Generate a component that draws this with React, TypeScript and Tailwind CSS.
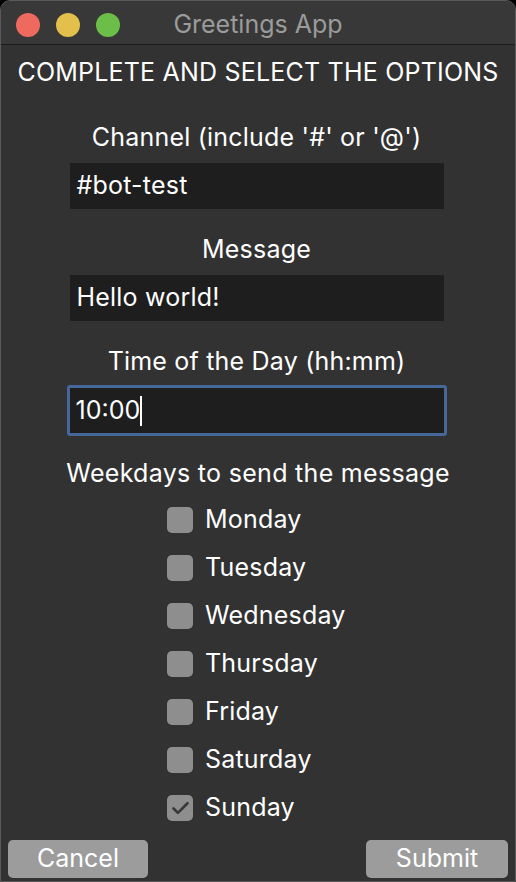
import { Check } from 'lucide-react';

const days = ['Monday', 'Tuesday', 'Wednesday', 'Thursday', 'Friday', 'Saturday', 'Sunday'];

function Field({ label, value, focused }: { label: string; value: string; focused?: boolean }) {
  return (
    <div className="flex flex-col items-center">
      <p className="text-[25px] leading-[28px] tracking-[0.2px] text-white">{label}</p>
      {focused ? (
        <div className="mt-[10px] w-[380px] h-[51px] rounded-[3px] border-[3px] border-[#46679a] bg-[#1e1e1e] flex items-center px-[6px]">
          <span className="text-[25px] text-white">10:00</span>
          <span className="w-[1.5px] h-[30px] bg-white" />
        </div>
      ) : (
        <div className="mt-[12px] w-[374px] h-[46px] bg-[#1e1e1e] flex items-center px-[7px]">
          <span className="text-[25px] tracking-[0.2px] text-white">{value}</span>
        </div>
      )}
    </div>
  );
}

export default function App() {
  return (
    <div className="w-[516px] h-[882px] bg-black font-['Inter',sans-serif]">
      <div className="w-full h-full rounded-t-[10px] border border-[#5a5a5a] bg-[#323232] flex flex-col overflow-hidden">
        {/* title bar */}
        <div className="h-[44px] shrink-0 bg-[#383838] border-b border-[#1a1a1a] flex items-center relative pt-[4px]">
          <div className="flex gap-[16px] pl-[15px]">
            <span className="w-[24px] h-[24px] rounded-full bg-[#ee6a5f]" />
            <span className="w-[24px] h-[24px] rounded-full bg-[#e3c04b]" />
            <span className="w-[24px] h-[24px] rounded-full bg-[#6bbf48]" />
          </div>
          <p className="absolute inset-0 pt-[4px] flex items-center justify-center text-[25px] text-[#9b9b9b]">
            Greetings App
          </p>
        </div>

        <p className="mt-[13px] text-center text-[25px] leading-[28px] tracking-[0.2px] text-white">
          COMPLETE AND SELECT THE OPTIONS
        </p>

        <div className="mt-[37px] flex flex-col gap-[26px] pr-[3px]">
          <Field label="Channel (include '#' or '@')" value="#bot-test" />
          <Field label="Message" value="Hello world!" />
          <Field label="Time of the Day (hh:mm)" value="10:00" focused />
        </div>

        <p className="mt-[23px] text-center text-[25px] leading-[28px] tracking-[0.3px] text-white">
          Weekdays to send the message
        </p>

        <div className="mt-[20px] flex flex-col gap-[22px] pl-[166px]">
          {days.map((d) => (
            <div key={d} className="flex items-center h-[26px] gap-[12px]">
              <span className="w-[26px] h-[26px] rounded-[5px] bg-[#8e8e8e] flex items-center justify-center">
                {d === 'Sunday' && <Check className="w-[21px] h-[21px] text-[#383838]" strokeWidth={3} />}
              </span>
              <span className="text-[25px] tracking-[0.2px] text-white">{d}</span>
            </div>
          ))}
        </div>

        <div className="mt-auto mb-[3px] flex justify-between px-[7px]">
          <button className="w-[140px] h-[38px] rounded-[5px] bg-[#9c9c9c] text-[25px] text-white">Cancel</button>
          <button className="w-[142px] h-[38px] rounded-[5px] bg-[#9c9c9c] text-[25px] text-white">Submit</button>
        </div>
      </div>
    </div>
  );
}
